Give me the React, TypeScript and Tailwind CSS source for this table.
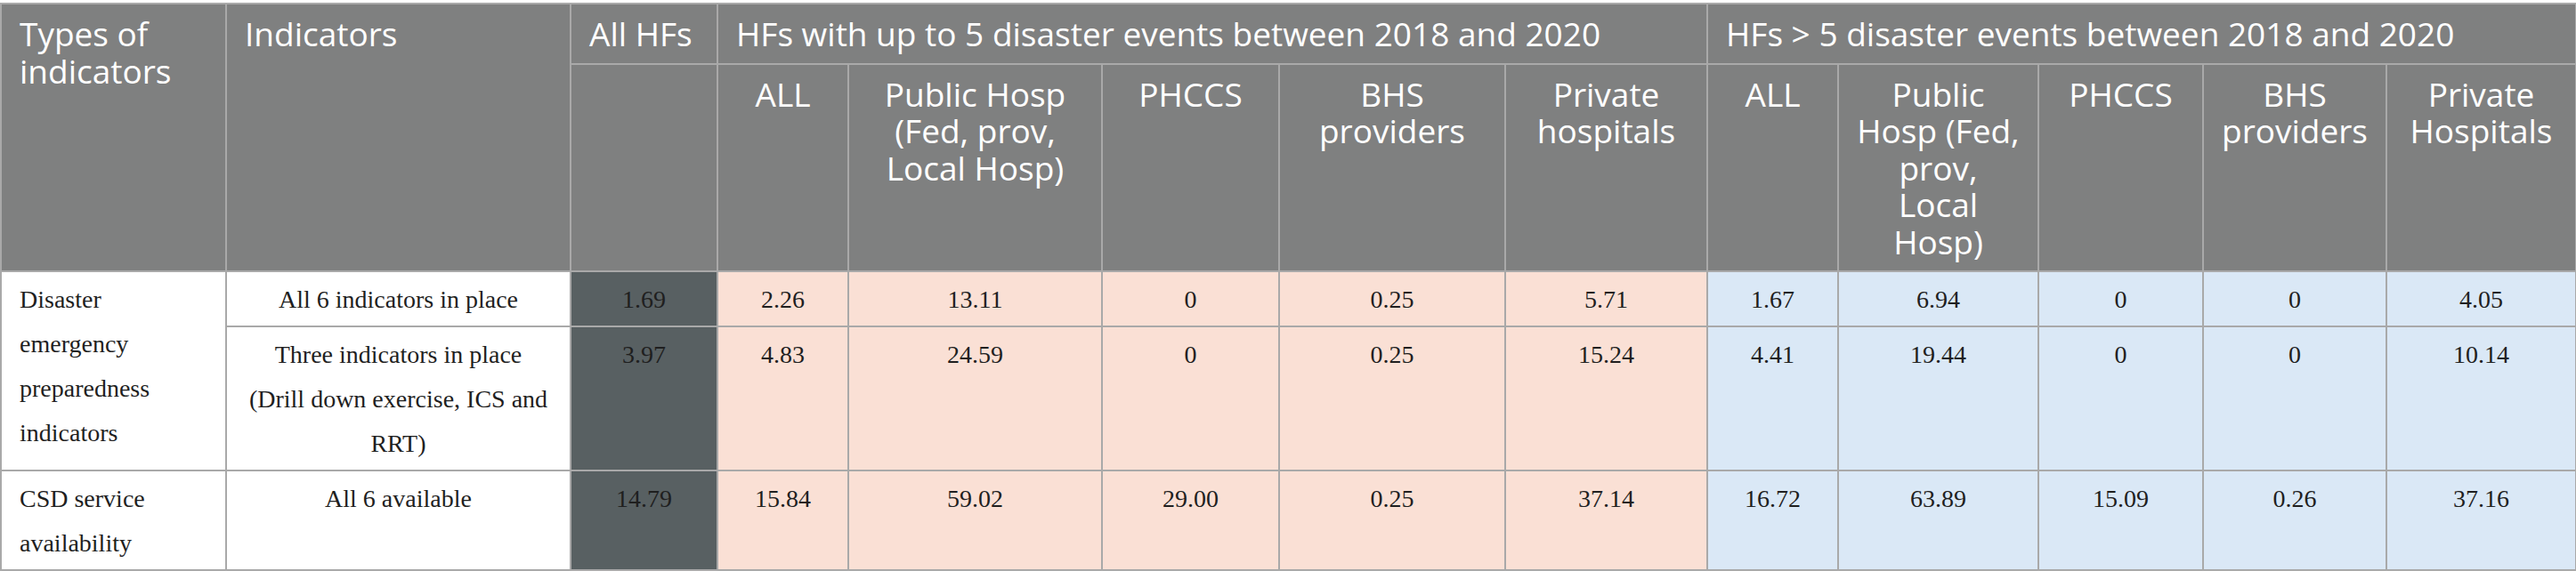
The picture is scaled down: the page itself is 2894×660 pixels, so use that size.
import React from 'react';

type Tone = 'dark' | 'peach' | 'blue';

interface Row {
    indicator: React.ReactNode;
    values: string[];
}

const widths = [
    'w-[253px]', 'w-[387px]', 'w-[165px]', 'w-[147px]', 'w-[285px]', 'w-[199px]', 'w-[254px]',
    'w-[227px]', 'w-[147px]', 'w-[225px]', 'w-[185px]', 'w-[206px]', 'w-[213px]',
];

const toneClass: Record<Tone, string> = {
    dark: 'bg-[#586062]',
    peach: 'bg-[#fae0d5]',
    blue: 'bg-[#dae8f6]',
};

// tone of each value column: All HFs, then 5 peach, then 5 blue
const tones: Tone[] = ['dark', 'peach', 'peach', 'peach', 'peach', 'peach', 'blue', 'blue', 'blue', 'blue', 'blue'];

const groupHeaders: React.ReactNode[] = [
    'ALL',
    <>Public Hosp<br />(Fed, prov,<br />Local Hosp)</>,
    'PHCCS',
    <>BHS<br />providers</>,
    <>Private<br />hospitals</>,
    'ALL',
    <>Public<br />Hosp (Fed,<br />prov,<br />Local<br />Hosp)</>,
    'PHCCS',
    <>BHS<br />providers</>,
    <>Private<br />Hospitals</>,
];

const disasterRows: Row[] = [
    {
        indicator: 'All 6 indicators in place',
        values: ['1.69', '2.26', '13.11', '0', '0.25', '5.71', '1.67', '6.94', '0', '0', '4.05'],
    },
    {
        indicator: <>Three indicators in place<br />(Drill down exercise, ICS and<br />RRT)</>,
        values: ['3.97', '4.83', '24.59', '0', '0.25', '15.24', '4.41', '19.44', '0', '0', '10.14'],
    },
];

const csdRow: Row = {
    indicator: 'All 6 available',
    values: ['14.79', '15.84', '59.02', '29.00', '0.25', '37.14', '16.72', '63.89', '15.09', '0.26', '37.16'],
};

const th = "border-2 border-[#a9a9a9] px-[20px] pt-[12px] pb-[12px] align-top font-normal text-white text-[37px] leading-[41.5px] font-['Open_Sans',sans-serif]";
const td = "border-2 border-[#a9a9a9] px-[20px] pt-[6px] pb-[4px] align-top text-[28px] leading-[50px] text-[#1f1f1f] font-['Liberation_Serif',serif]";

function ValueCells({ values }: { values: string[] }) {
    return (
        <>
            {values.map((v, i) => (
                <td key={i} className={`${td} text-center ${toneClass[tones[i]]}`}>
                    {v}
                </td>
            ))}
        </>
    );
}

export default function App() {
    return (
        <div className="bg-white w-[2894px] h-[660px] pt-[3px]">
            <table className="table-fixed border-collapse w-[2894px]">
                <colgroup>
                    {widths.map((w, i) => (
                        <col key={i} className={w} />
                    ))}
                </colgroup>
                <thead className="bg-[#7f8080]">
                    <tr>
                        <th rowSpan={2} className={`${th} text-left`}>Types of<br />indicators</th>
                        <th rowSpan={2} className={`${th} text-left`}>Indicators</th>
                        <th className={`${th} text-left whitespace-nowrap`}>All HFs</th>
                        <th colSpan={5} className={`${th} text-left whitespace-nowrap`}>
                            HFs with up to 5 disaster events between 2018 and 2020
                        </th>
                        <th colSpan={5} className={`${th} text-left whitespace-nowrap`}>
                            HFs &gt; 5 disaster events between 2018 and 2020
                        </th>
                    </tr>
                    <tr>
                        <th className={th} />
                        {groupHeaders.map((h, i) => (
                            <th key={i} className={`${th} text-center whitespace-nowrap`}>{h}</th>
                        ))}
                    </tr>
                </thead>
                <tbody>
                    {disasterRows.map((row, i) => (
                        <tr key={i}>
                            {i === 0 && (
                                <td rowSpan={2} className={`${td} text-left bg-white`}>
                                    Disaster<br />emergency<br />preparedness<br />indicators
                                </td>
                            )}
                            <td className={`${td} text-center bg-white`}>{row.indicator}</td>
                            <ValueCells values={row.values} />
                        </tr>
                    ))}
                    <tr>
                        <td className={`${td} text-left bg-white`}>CSD service<br />availability</td>
                        <td className={`${td} text-center bg-white`}>{csdRow.indicator}</td>
                        <ValueCells values={csdRow.values} />
                    </tr>
                </tbody>
            </table>
        </div>
    );
}
